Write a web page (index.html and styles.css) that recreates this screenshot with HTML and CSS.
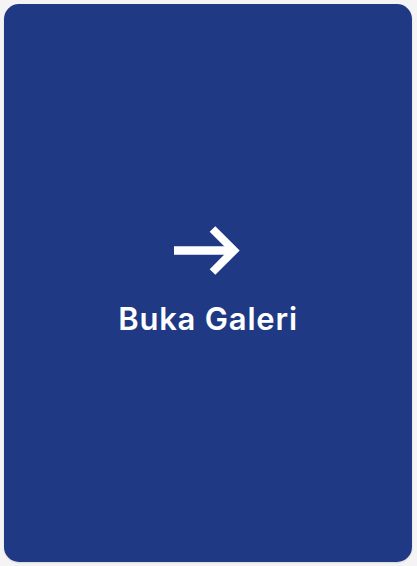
FILE: index.html
```html
<!DOCTYPE html>
<html lang="id">
<head>
<meta charset="utf-8">
<title>Buka Galeri</title>
<link rel="stylesheet" href="styles.css">
</head>
<body>
<a class="card" href="#">
  <svg class="arrow" width="70" height="50" viewBox="0 0 70 50" aria-hidden="true">
    <line x1="1" y1="24.5" x2="60" y2="24.5" stroke="#fff" stroke-width="8.5"/>
    <polyline points="39.5,3 61,24.5 39.5,46" fill="none" stroke="#fff" stroke-width="8" stroke-linejoin="miter" stroke-miterlimit="10"/>
  </svg>
  <span class="label">Buka Galeri</span>
</a>
</body>
</html>
```
FILE: styles.css
```css
html, body {
  margin: 0;
  padding: 0;
}
body {
  background: #f4f4f5;
  padding: 4px;
  box-sizing: border-box;
  width: 417px;
  height: 566px;
}
.card {
  display: flex;
  flex-direction: column;
  align-items: center;
  justify-content: center;
  gap: 25px;
  width: 408px;
  height: 558px;
  box-sizing: border-box;
  padding-bottom: 3px;
  background: #1f3984;
  border-radius: 15px;
  box-shadow: 0 1px 2px rgba(0, 0, 0, 0.12);
  text-decoration: none;
  color: #ffffff;
}
.arrow {
  display: block;
}
.label {
  font-family: Inter, "Noto Sans", sans-serif;
  font-weight: 600;
  font-size: 31px;
  line-height: 36px;
  letter-spacing: 0.8px;
  color: #ffffff;
}
```
